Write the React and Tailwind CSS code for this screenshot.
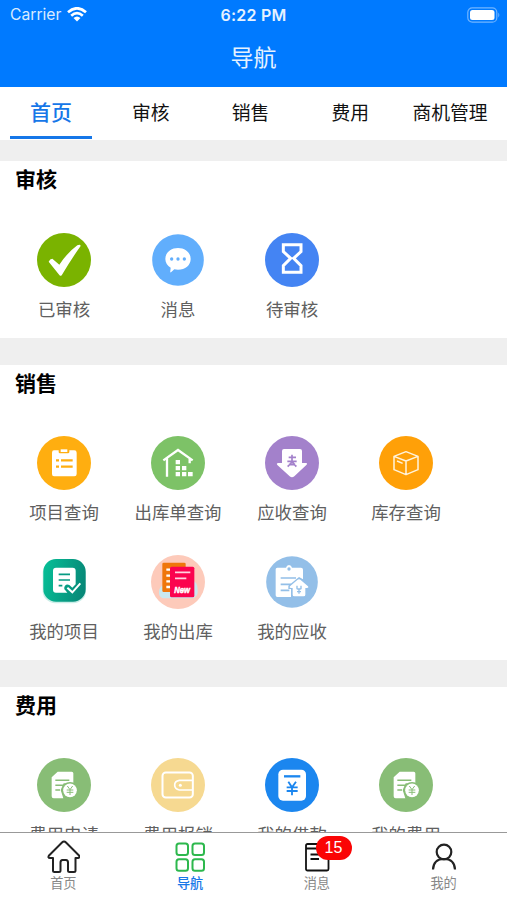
import React from "react";

const NO_ICON = { viewBox: "0 0 162 162", fill: "none", className: "block h-[54px] w-[54px]" };

function Disc({ color, r = 81, children }) {
  return (
    <svg {...NO_ICON}>
      <circle cx="81" cy="81" r={r} fill={color} />
      {children}
    </svg>
  );
}

const Approved = () => (
  <Disc color="#7ab300">
    <path d="M35 86 Q39 77 46 77 L67 95 Q90 60 121 37 Q130 33 131 39 Q103 78 76 124 Q72 132 67 126 Z" fill="#fff" />
  </Disc>
);

const Message = () => (
  <Disc color="#61aefc" r={77.5}>
    <path d="M81 45c22 0 38 14 38 33s-16 32-38 32c-4 0-8 0-11-1l-10 9c-2 1-3 0-2-3l1-11c-10-6-16-15-16-26 0-19 16-33 38-33z" fill="#fff" />
    <circle cx="62" cy="78" r="5" fill="#61aefc" />
    <circle cx="81" cy="78" r="5" fill="#61aefc" />
    <circle cx="100" cy="78" r="5" fill="#61aefc" />
  </Disc>
);

const Hourglass = () => (
  <Disc color="#4484f3">
    <path d="M55 35.500h53v20L86 76l22 22v20H55V98l22-22-22-20.500z" stroke="#fff" strokeWidth="9" />
  </Disc>
);

const Project = () => (
  <Disc color="#ffae10">
    <path d="M51 43h14v5q0 4 4 4h24q4 0 4-4v-5h15q7 0 7 7v64q0 7-7 7H51q-6 0-6-7V50q0-7 6-7z" fill="#fff" />
    <path d="M71 40h20v8H71z" fill="#fff" />
    <path d="M72 73h35M72 92h35M57 73h9M57 92h9" stroke="#ffae10" strokeWidth="7" />
  </Disc>
);

const Warehouse = () => (
  <Disc color="#7dc267">
    <path d="M37 73 81 42l44 31M48 67v55M116 68v14" stroke="#fff" strokeWidth="7" />
    <path d="M74 72h13v13H74zM74 90h13v13H74zM93 90h13v13H93zM74 108h13v13H74zM93 108h13v13H93zM111 108h14v13h-14z" fill="#fff" />
  </Disc>
);

const Receivable = () => (
  <Disc color="#a381cb">
    <path d="M57 39h48q6 0 6 6v36h12q6 1 1 6l-36 34q-7 6-14 0L37 87q-4-6 3-6h11V45q0-6 6-6z" fill="#fff" />
    <path d="M71 64h22M67 76h28M81 56v22L68 92M81 77l13 15M71 86h20" stroke="#a381cb" strokeWidth="5" />
  </Disc>
);

const Stock = () => (
  <Disc color="#ffa008">
    <path d="M81 47l36 14v40l-36 15-36-15V61zM45 61l36 14 36-14M81 75v41M54 75l17 7" stroke="#fff3dd" strokeWidth="4.500" strokeLinejoin="round" />
  </Disc>
);

const MyProject = () => (
  <svg {...NO_ICON}>
    <defs>
      <linearGradient id="teal" x1="0" x2="1" y1="0.400" y2="0.600">
        <stop stopColor="#06bc95" />
        <stop offset="1" stopColor="#078777" />
      </linearGradient>
    </defs>
    <rect x="17" y="16" width="130" height="129" rx="38" fill="#caeee8" />
    <rect x="19" y="12" width="127" height="128" rx="38" fill="url(#teal)" />
    <path d="M57 38h50q9 0 9 9v41l-10 10-8-7q-8-6-14 1-5 8 1 14l6 7H57q-9 0-9-9V47q0-9 9-9z" fill="#fff" />
    <path d="M65 58h34M65 75h34M65 92h11" stroke="#079b83" strokeWidth="5" />
    <path d="M91 98l15 14 24-27" stroke="#fff" strokeWidth="6" />
  </svg>
);

const MyOutbound = () => (
  <Disc color="#fdcaba">
    <path d="M24 113c0-13 6-20 14-22l82-14c15-1 20 13 20 28 2 16-7 24-20 25H42c-12 0-18-7-18-17z" fill="#c9e8ef" />
    <rect x="34" y="23" width="70" height="88" rx="4" fill="#ef760b" />
    <path d="M46 44h12M46 62h12M46 79h12M46 96h12" stroke="#fff" strokeWidth="7" />
    <rect x="57" y="35" width="73" height="92" rx="5" fill="#fb034f" />
    <path d="M72 52h46M72 70h34" stroke="#ffd2df" strokeWidth="5" />
    <text x="70" y="113" fill="#fff" stroke="#fff" strokeWidth="1.500" fontFamily="Liberation Sans, sans-serif" fontSize="29" fontWeight="700" fontStyle="italic" textLength="47" lengthAdjust="spacingAndGlyphs">New</text>
  </Disc>
);

const MyReceivable = () => (
  <Disc color="#93bfe8" r={77.500}>
    <path d="M37 38h26q2-8 9-8t9 8h27q6 0 6 6v82H37q-5 0-5-5V43q0-5 5-5z" fill="#fff" />
    <circle cx="72" cy="42" r="5" fill="#93bfe8" />
    <path d="M47 69h46M47 88h31M47 106h26" stroke="#93bfe8" strokeWidth="5" />
    <path d="M102 66l-32 26v10h8v26h50V80z" fill="#93bfe8" />
    <path d="M102 73q3 0 5 2l22 19q3 5-3 5h-5v20q0 5-5 5H88q-5 0-5-5V99h-5q-6 0-3-5l22-19q2-2 5-2z" fill="#fff" />
    <path d="M96 92v9q6 4 12 0v-9M102 100v16M96 110h12" stroke="#93bfe8" strokeWidth="4" />
  </Disc>
);

const Expense = () => (
  <Disc color="#88bd76">
    <path d="M62 41h42q5 0 5 5v30H80l-9 20 8 25H50q-6 0-6-6V58z" fill="#fff" />
    <path d="M55 67h42M55 82h24M55 96h14" stroke="#88bd76" strokeWidth="4.500" />
    <circle cx="99" cy="97" r="25" fill="#88bd76" />
    <circle cx="99" cy="97" r="20.500" fill="#fff" />
    <path d="M91 84l8 11 8-11M99 95v16M89 96h20M89 103h20" stroke="#88bd76" strokeWidth="3" />
  </Disc>
);

const Wallet = () => (
  <Disc color="#f6d991">
    <rect x="34.500" y="43.500" width="91" height="75" rx="10" stroke="#fff" strokeWidth="6" />
    <path d="M125 67H85q-14 2-14 14t14 15h40" stroke="#fff" strokeWidth="5" />
    <circle cx="88" cy="82" r="4.500" fill="#fff" />
  </Disc>
);

const Loan = () => (
  <Disc color="#1b86ef">
    <rect x="40" y="35" width="83" height="93" rx="14" fill="#fff" />
    <path d="M57 55h49" stroke="#1b86ef" strokeWidth="7" />
    <path d="M70 71l11 17 12-17M81 88v24M65 88h33M65 99h33" stroke="#1b86ef" strokeWidth="5.500" />
  </Disc>
);

const SECTIONS = [
  {
    title: "审核",
    size: "h-[177px]",
    heading: "h-[72px]",
    items: [["已审核", Approved], ["消息", Message], ["待审核", Hourglass]],
  },
  {
    title: "销售",
    size: "h-[295px]",
    items: [
      ["项目查询", Project],
      ["出库单查询", Warehouse],
      ["应收查询", Receivable],
      ["库存查询", Stock],
      ["我的项目", MyProject],
      ["我的出库", MyOutbound],
      ["我的应收", MyReceivable],
    ],
  },
  {
    title: "费用",
    size: "h-[145px]",
    items: [["费用申请", Expense], ["费用报销", Wallet], ["我的借款", Loan], ["我的费用", Expense]],
  },
];

function Section({ title, size, heading = "h-[71px]", items }) {
  return (
    <section className={`shrink-0 overflow-hidden bg-white ${size}`}>
      <h2 className={`pl-[15px] pt-[3px] text-[21px] font-bold leading-[31px] text-black ${heading}`}>{title}</h2>
      <div className="ml-[7px] grid w-[456px] grid-cols-4">
        {items.map(([label, Icon]) => (
          <div key={label} className="flex h-[119px] flex-col items-center">
            <Icon />
            <span className="mt-[10px] whitespace-nowrap text-[17.4px] leading-[26px] text-[#606060]">{label}</span>
          </div>
        ))}
      </div>
    </section>
  );
}

const Home = () => (
  <svg viewBox="-1 0 34 34" fill="none" stroke="#222" strokeWidth="2" strokeLinejoin="round" className="h-[34px] w-[34px]">
    <path d="M17 1.500Q18 1.500 19 2.500L32 15.500Q33 18 31 18H28.500V30.500Q28.500 32 27 32H22.500Q21 32 21 30.500V22.500Q21 20 19 20H15.500Q13.500 20 13.500 22.500V30.500Q13.500 32 12 32H7.500Q6 32 6 30.500V18H3Q.500 18 2 15.500L15 2.500Q16 1.500 17 1.500Z" />
  </svg>
);

const Grid = () => (
  <svg viewBox="0 0 34 34" fill="none" stroke="#2db84d" strokeWidth="2" className="h-[34px] w-[34px]">
    <rect x="3.500" y="3.500" width="11.500" height="11.500" rx="2.500" />
    <rect x="19.500" y="3.500" width="11.500" height="11.500" rx="2.500" />
    <rect x="3.500" y="19.200" width="11.500" height="11.500" rx="2.500" />
    <rect x="19.500" y="19.200" width="11.500" height="11.500" rx="2.500" />
  </svg>
);

const Notebook = () => (
  <svg viewBox="0 0 34 34" fill="none" stroke="#111" strokeWidth="1.800" className="h-[34px] w-[34px]">
    <rect x="6" y="4" width="22.500" height="26.500" rx="1.500" />
    <path d="M6 8.500H28M10.500 14.500H24M10.500 19H19" />
  </svg>
);

const Person = () => (
  <svg viewBox="0 0 34 34" fill="none" stroke="#222" strokeWidth="2.200" className="h-[34px] w-[34px]">
    <circle cx="17" cy="12" r="7.300" />
    <path d="M6 29.500Q6.500 19 17 19T28 29.500" />
  </svg>
);

const NAV = [["首页", Home], ["导航", Grid], ["消息", Notebook, 15], ["我的", Person]];
const TABS = ["首页", "审核", "销售", "费用", "商机管理"];

export default function App() {
  return (
    <div className="flex h-[900px] w-[507px] flex-col overflow-hidden bg-[#efefef] font-['Liberation_Sans','Noto_Sans_CJK_SC',sans-serif]">
      <header className="h-[87px] shrink-0 bg-[#007aff] text-white">
        <div className="grid h-[30px] grid-cols-3 items-center font-['Inter','Noto_Sans_CJK_SC',sans-serif] text-[16px]">
          <div className="flex items-center gap-[6px] pl-[10px] text-[#d8eaff]">
            <span className="text-[15.700px]">Carrier</span>
            <svg viewBox="0 0 20 15" className="h-[15px] w-[20px]" fill="none" stroke="#fff" strokeWidth="2.700">
              <path d="M1 5.300Q10-2.700 19 5.300M4.200 8.700Q10 3.600 15.800 8.700" />
              <path d="M6.500 11Q10 8 13.500 11L10 14.500Z" fill="#fff" stroke="none" />
            </svg>
          </div>
          <span className="text-center font-semibold tracking-[0.2px] text-[#e6f2ff]">6:22 PM</span>
          <svg viewBox="0 0 33 16" className="mr-[7px] h-[16px] w-[33px] justify-self-end" fill="none">
            <rect x=".8" y=".8" width="29" height="14.400" rx="4.500" stroke="#72b5ff" strokeWidth="1.200" />
            <rect x="3" y="3" width="24.500" height="10" rx="2.500" fill="#fff" />
            <path d="M31.300 5.500q2 2.500 0 5z" fill="#72b5ff" />
          </svg>
        </div>
        <h1 className="text-center text-[23px] leading-[57px] text-[#e6f2ff]">导航</h1>
      </header>

      <nav className="flex h-[53px] shrink-0 bg-white pl-px">
        {TABS.map((tab, i) => (
          <div key={tab} className="flex w-[99.8px] flex-col items-center">
            <span
              className={
                i === 0
                  ? "h-[49px] text-[21px] font-medium leading-[51px] text-[#1677e8]"
                  : "h-[49px] whitespace-nowrap text-[18.8px] leading-[54px] text-[#111]"
              }
            >
              {tab}
            </span>
            {i === 0 && <div className="h-[3px] w-[82px] bg-[#1677e8]" />}
          </div>
        ))}
      </nav>

      <main className="flex min-h-0 flex-1 flex-col gap-[27px] overflow-hidden pt-[21px]">
        {SECTIONS.map((s) => (
          <Section key={s.title} {...s} />
        ))}
      </main>

      <footer className="grid h-[68px] shrink-0 grid-cols-4 border-t-[1.500px] border-[#999] bg-white">
        {NAV.map(([label, Icon, badge]) => (
          <div key={label} className="relative flex flex-col items-center pt-[7px]">
            <Icon />
            <span className={`mt-px text-[13.200px] leading-[17px] ${label === "导航" ? "font-medium text-[#1677e8]" : "text-[#888]"}`}>{label}</span>
            {badge && (
              <span className="absolute left-[62px] top-[3px] flex h-[24px] w-[36px] items-center justify-center rounded-full bg-[#fa0505] text-[16px] text-white">
                {badge}
              </span>
            )}
          </div>
        ))}
      </footer>
    </div>
  );
}
